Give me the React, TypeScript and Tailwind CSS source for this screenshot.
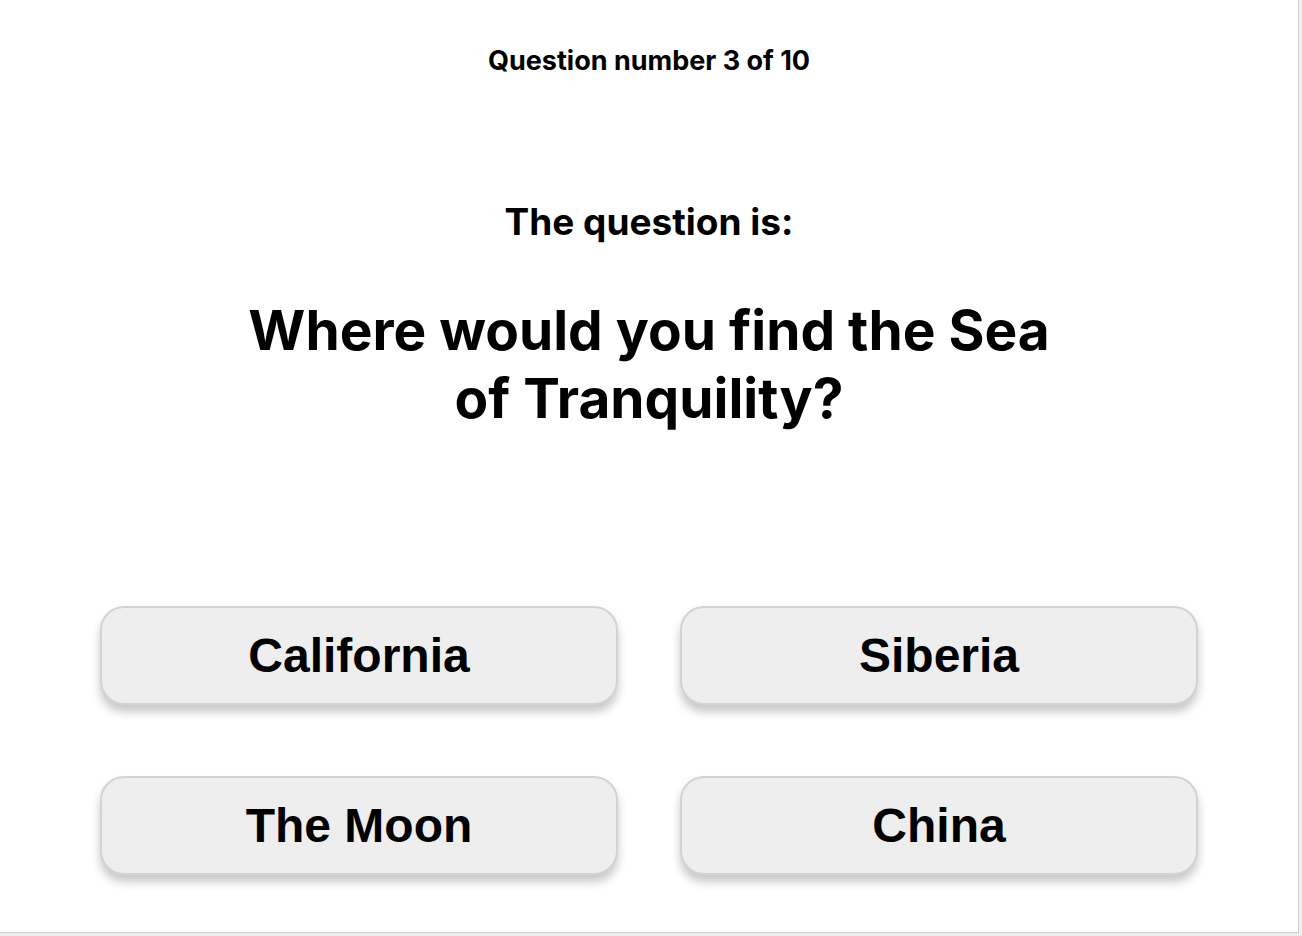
const answers = ["California", "Siberia", "The Moon", "China"];

function AnswerButton({ label }: { label: string }) {
  return (
    <button
      type="button"
      className="h-[99px] w-[518px] rounded-[24px] border-2 border-[#d3d3d3] bg-[#eeeeee] text-[48px] font-bold text-black shadow-[0_7px_10px_rgba(0,0,0,0.22)] [font-family:'Liberation_Sans',Arial,sans-serif]"
    >
      {label}
    </button>
  );
}

export default function App() {
  return (
    <div className="h-[936px] w-full bg-[#eeeeee]">
      <div className="flex h-[933px] w-[1299px] flex-col items-center border-r border-b border-[#d0d0d0] bg-white text-black [font-family:Inter,'Noto_Sans',sans-serif]">
        <div className="pt-[43px] text-[27px] leading-[36px] font-bold">
          Question number 3 of 10
        </div>
        <div className="mt-[121px] text-[37px] leading-[44px] font-bold">
          The question is:
        </div>
        <h1 className="mt-[52px] w-[820px] text-center text-[55px] leading-[68px] font-bold">
          Where would you find the Sea of Tranquility?
        </h1>
        <div className="mt-[174px] grid grid-cols-2 gap-x-[62px] gap-y-[71px]">
          {answers.map((a) => (
            <AnswerButton key={a} label={a} />
          ))}
        </div>
      </div>
    </div>
  );
}
